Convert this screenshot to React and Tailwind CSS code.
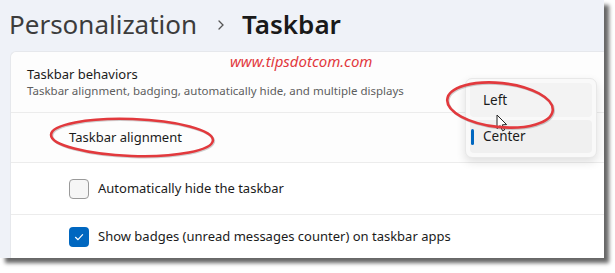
import React from 'react';

const font = { fontFamily: '"Noto Sans", "Open Sans", sans-serif' };

function Checkbox({ checked }) {
  if (checked) {
    return (
      <span className="flex h-[20px] w-[20px] items-center justify-center rounded-[4px] bg-[#0067c0]">
        <svg width="12" height="12" viewBox="0 0 12 12" fill="none">
          <path d="M2.5 6.3 L5 8.7 L9.6 3.6" stroke="white" strokeWidth="1.2" strokeLinecap="round" strokeLinejoin="round" />
        </svg>
      </span>
    );
  }
  return <span className="block h-[20px] w-[20px] rounded-[4px] border border-[#9a9a9a] bg-[#f6f6f6]" />;
}

function Cursor() {
  return (
    <svg width="13" height="18" viewBox="0 0 13 18" className="absolute left-[496px] top-[114px]">
      <path d="M1 1 L1 14.5 L4.2 11.6 L6.6 16.8 L8.6 15.9 L6.3 10.8 L10.6 10.6 Z" fill="white" stroke="#222" strokeWidth="1" strokeLinejoin="round" />
    </svg>
  );
}

function Marks() {
  return (
    <svg width="615" height="273" className="pointer-events-none absolute left-0 top-0">
      <g fill="none" strokeWidth="2.6">
        <ellipse cx="133" cy="138.5" rx="81" ry="18.5" transform="rotate(2 133 138.5)" stroke="rgba(0,0,0,0.18)" />
        <ellipse cx="132" cy="137.5" rx="81" ry="18.5" transform="rotate(2 132 137.5)" stroke="#e2393d" />
        <ellipse cx="501" cy="106" rx="53" ry="22" transform="rotate(6 501 106)" stroke="rgba(0,0,0,0.18)" />
        <ellipse cx="500" cy="105" rx="53" ry="22" transform="rotate(6 500 105)" stroke="#e2393d" />
      </g>
    </svg>
  );
}

export default function App() {
  return (
    <div className="relative h-[273px] w-[615px] overflow-hidden bg-white" style={font}>
      <div className="flex h-[258px] w-[604px] flex-col bg-[#eff2f8] shadow-[5px_5px_4px_rgba(0,0,0,0.6)]">
        <div className="flex h-[51px] items-center pl-[9px] pb-[4px] text-[26px] leading-none">
          <span className="text-[#3c3c3c]">Personalization</span>
          <svg width="8" height="12" viewBox="0 0 8 12" className="ml-[20px] mr-[17px] mt-[2px]">
            <path d="M2 2 L6 6 L2 10" stroke="#555" strokeWidth="1.3" fill="none" strokeLinecap="round" />
          </svg>
          <span className="font-semibold text-[#1a1a1a]">Taskbar</span>
        </div>
        <div className="ml-[10px] flex flex-1 flex-col rounded-tl-[6px] border-l border-t border-[#e6e8ec] bg-[#fdfdfd]">
          <div className="flex h-[60px] flex-col justify-center pl-[16px] pb-[2px]">
            <div className="text-[13px] leading-[18px] text-[#1b1b1b]">Taskbar behaviors</div>
            <div className="text-[11.5px] leading-[15px] text-[#5e5e5e]">Taskbar alignment, badging, automatically hide, and multiple displays</div>
          </div>
          <div className="flex h-[50px] items-center border-t border-[#ececec] pl-[58px] text-[13px] text-[#1b1b1b]">
            Taskbar alignment
          </div>
          <div className="flex h-[52px] items-center gap-[9px] border-t border-[#ececec] bg-white pl-[58px] text-[13px] text-[#1b1b1b]">
            <Checkbox />
            <span>Automatically hide the taskbar</span>
          </div>
          <div className="flex flex-1 items-center gap-[9px] border-t border-[#ececec] bg-white pl-[58px] text-[13px] text-[#1b1b1b]">
            <Checkbox checked />
            <span>Show badges (unread messages counter) on taskbar apps</span>
          </div>
        </div>
      </div>

      <div className="absolute left-[230px] top-[50px] text-[15px] italic text-[#e2393d]">www.tipsdotcom.com</div>

      <div className="absolute left-[465px] top-[78px] flex h-[80px] w-[132px] flex-col gap-[3px] rounded-[7px] border border-[#e8e8e8] bg-[#f9f9f9] p-[4px] shadow-[0_4px_10px_rgba(0,0,0,0.12)]">
        <div className="flex flex-1 items-center rounded-[4px] bg-[#f3f3f3] pl-[13px] text-[13.5px] text-[#1b1b1b]">Left</div>
        <div className="relative flex flex-1 items-center rounded-[4px] bg-[#f0f0f0] pl-[13px] text-[13.5px] text-[#1b1b1b]">
          <span className="absolute left-[1px] top-[9px] h-[16px] w-[3px] rounded-full bg-[#0067c0]" />
          Center
        </div>
      </div>

      <Cursor />
      <Marks />
    </div>
  );
}
